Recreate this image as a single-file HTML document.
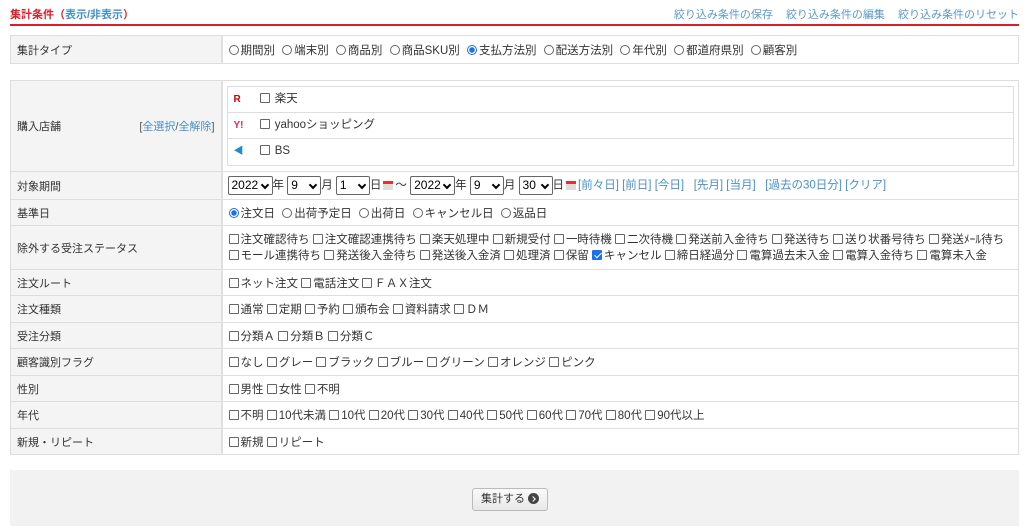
<!DOCTYPE html>
<html><head><meta charset="utf-8"><style>
*{box-sizing:border-box;margin:0;padding:0}
body{width:1024px;height:531px;background:#fff;font-family:"Liberation Sans","Noto Sans CJK JP",sans-serif;font-size:11.5px;color:#333;position:relative;overflow:hidden}
.hdr{position:absolute;left:10px;top:5px;width:1009px;height:21px;border-bottom:2px solid #d9202a;font-size:11px}
.hdr .t{position:absolute;left:0;top:1px;color:#d9202a;font-weight:bold}
.hdr .t a{color:#4a90c8;font-weight:bold}
.hdr .r{position:absolute;right:0;top:1px;color:#5a9ac8;word-spacing:0}
.hdr .r span{margin-left:10px}
a{color:#4a90c8;text-decoration:none}
table{position:absolute;left:10px;width:1009px;border-collapse:collapse;background:#fff}
td{border:1px solid #ddd;padding:0 6px;vertical-align:middle;white-space:nowrap}
td.l{background:#f4f4f4;width:211px;border-right:2px solid #e0e0e0;font-size:11px}
.rb,.cb{display:inline-block;width:10px;height:10px;border:1px solid #666;vertical-align:-1px;margin-right:2px;background:#fff}
.rb{border-radius:50%}
.rb.on{border-color:#1a73e8;background:radial-gradient(circle,#1a73e8 2.5px,#fff 3px)}
.cb{border-radius:1px}
.cb.on{background:#1a73e8;border-color:#1a73e8;position:relative}
.cb.on:after{content:"";position:absolute;left:2.5px;top:0px;width:3px;height:6px;border:solid #fff;border-width:0 1.5px 1.5px 0;transform:rotate(45deg)}
.it{margin-right:4px}
.sel{display:inline-block;height:19px;border:1px solid #666;border-radius:2px;padding:1px 3px;font-size:12px;vertical-align:middle;position:relative;color:#000}
.sel:after{content:"";position:absolute;right:4px;top:5px;width:4px;height:4px;border:solid #000;border-width:0 2px 2px 0;transform:rotate(45deg)}
.cal{display:inline-block;width:10px;height:9px;border-top:3px solid #d33;background:#ddd;vertical-align:-1px;margin:0 2px}
.shops{border:1px solid #ddd}
.shops div{height:26px;line-height:25px;border-bottom:1px solid #ddd;padding-left:6px}
.shops div:last-child{border-bottom:none}
.ic{display:inline-block;width:26px;font-weight:bold;font-size:10px}
.foot{position:absolute;left:10px;top:470px;width:1009px;height:56px;background:#f2f2f2}
.btn{position:absolute;left:462px;top:18px;width:76px;height:23px;border:1px solid #bbb;border-radius:3px;background:linear-gradient(#fafafa,#e8e8e8);text-align:center;line-height:21px;color:#333;font-size:11px}
.btn i{display:inline-block;width:11px;height:11px;border-radius:50%;background:#444;vertical-align:-2px;margin-left:3px;position:relative}
.btn i:after{content:"";position:absolute;left:2.5px;top:3.5px;width:3px;height:3px;border:solid #fff;border-width:1.5px 1.5px 0 0;transform:rotate(45deg)}
</style></head><body>
<div class="hdr"><div class="t">集計条件（<a>表示/非表示</a>）</div><div class="r"><span>絞り込み条件の保存</span> <span>絞り込み条件の編集</span> <span>絞り込み条件のリセット</span></div></div>
<table style="top:35px"><tr style="height:28px"><td class="l">集計タイプ</td><td><span class="it"><span class="rb"></span>期間別</span> <span class="it"><span class="rb"></span>端末別</span> <span class="it"><span class="rb"></span>商品別</span> <span class="it"><span class="rb"></span>商品SKU別</span> <span class="it"><span class="rb on"></span>支払方法別</span> <span class="it"><span class="rb"></span>配送方法別</span> <span class="it"><span class="rb"></span>年代別</span> <span class="it"><span class="rb"></span>都道府県別</span> <span class="it"><span class="rb"></span>顧客別</span></td></tr></table>
<table style="top:80px">
<tr style="height:90px"><td class="l"><span>購入店舗</span><span style="float:right;color:#555">[<a>全選択</a>/<a>全解除</a>]</span></td><td style="padding:5px 4px"><div class="shops"><div><span class="ic" style="color:#c00">R</span><span class="cb"></span> 楽天</div><div><span class="ic" style="color:#e0245e">Y!</span><span class="cb"></span> yahooショッピング</div><div><span class="ic" style="color:#1a8fd8">◀</span><span class="cb"></span> BS</div></div></td></tr>
<tr style="height:28px"><td class="l">対象期間</td><td style="padding-left:5px"><span class="sel" style="width:45px">2022</span>年 <span class="sel" style="width:34px">9</span>月 <span class="sel" style="width:34px">1</span>日<span class="cal"></span>～ <span class="sel" style="width:45px">2022</span>年 <span class="sel" style="width:34px">9</span>月 <span class="sel" style="width:34px">30</span>日<span class="cal"></span><a>[前々日]</a> <a>[前日]</a> <a>[今日]</a> &nbsp; <a>[先月]</a> <a>[当月]</a> &nbsp; <a>[過去の30日分]</a> <a>[クリア]</a></td></tr>
<tr style="height:26px"><td class="l">基準日</td><td><span class="it"><span class="rb on"></span>注文日</span> <span class="it"><span class="rb"></span>出荷予定日</span> <span class="it"><span class="rb"></span>出荷日</span> <span class="it"><span class="rb"></span>キャンセル日</span> <span class="it"><span class="rb"></span>返品日</span></td></tr>
<tr style="height:44px"><td class="l">除外する受注ステータス</td><td style="line-height:16px"><span class="cb"></span>注文確認待ち <span class="cb"></span>注文確認連携待ち <span class="cb"></span>楽天処理中 <span class="cb"></span>新規受付 <span class="cb"></span>一時待機 <span class="cb"></span>二次待機 <span class="cb"></span>発送前入金待ち <span class="cb"></span>発送待ち <span class="cb"></span>送り状番号待ち <span class="cb"></span>発送ﾒｰﾙ待ち<br><span class="cb"></span>モール連携待ち <span class="cb"></span>発送後入金待ち <span class="cb"></span>発送後入金済 <span class="cb"></span>処理済 <span class="cb"></span>保留 <span class="cb on"></span>キャンセル <span class="cb"></span>締日経過分 <span class="cb"></span>電算過去未入金 <span class="cb"></span>電算入金待ち <span class="cb"></span>電算未入金</td></tr>
<tr style="height:26px"><td class="l">注文ルート</td><td><span class="cb"></span>ネット注文 <span class="cb"></span>電話注文 <span class="cb"></span>ＦＡＸ注文</td></tr>
<tr style="height:27px"><td class="l">注文種類</td><td><span class="cb"></span>通常 <span class="cb"></span>定期 <span class="cb"></span>予約 <span class="cb"></span>頒布会 <span class="cb"></span>資料請求 <span class="cb"></span>ＤＭ</td></tr>
<tr style="height:26px"><td class="l">受注分類</td><td><span class="cb"></span>分類Ａ <span class="cb"></span>分類Ｂ <span class="cb"></span>分類Ｃ</td></tr>
<tr style="height:27px"><td class="l">顧客識別フラグ</td><td><span class="cb"></span>なし <span class="cb"></span>グレー <span class="cb"></span>ブラック <span class="cb"></span>ブルー <span class="cb"></span>グリーン <span class="cb"></span>オレンジ <span class="cb"></span>ピンク</td></tr>
<tr style="height:26px"><td class="l">性別</td><td><span class="cb"></span>男性 <span class="cb"></span>女性 <span class="cb"></span>不明</td></tr>
<tr style="height:27px"><td class="l">年代</td><td><span class="cb"></span>不明 <span class="cb"></span>10代未満 <span class="cb"></span>10代 <span class="cb"></span>20代 <span class="cb"></span>30代 <span class="cb"></span>40代 <span class="cb"></span>50代 <span class="cb"></span>60代 <span class="cb"></span>70代 <span class="cb"></span>80代 <span class="cb"></span>90代以上</td></tr>
<tr style="height:26px"><td class="l">新規・リピート</td><td><span class="cb"></span>新規 <span class="cb"></span>リピート</td></tr>
</table>
<div class="foot"><div class="btn">集計する<i></i></div></div>
</body></html>
